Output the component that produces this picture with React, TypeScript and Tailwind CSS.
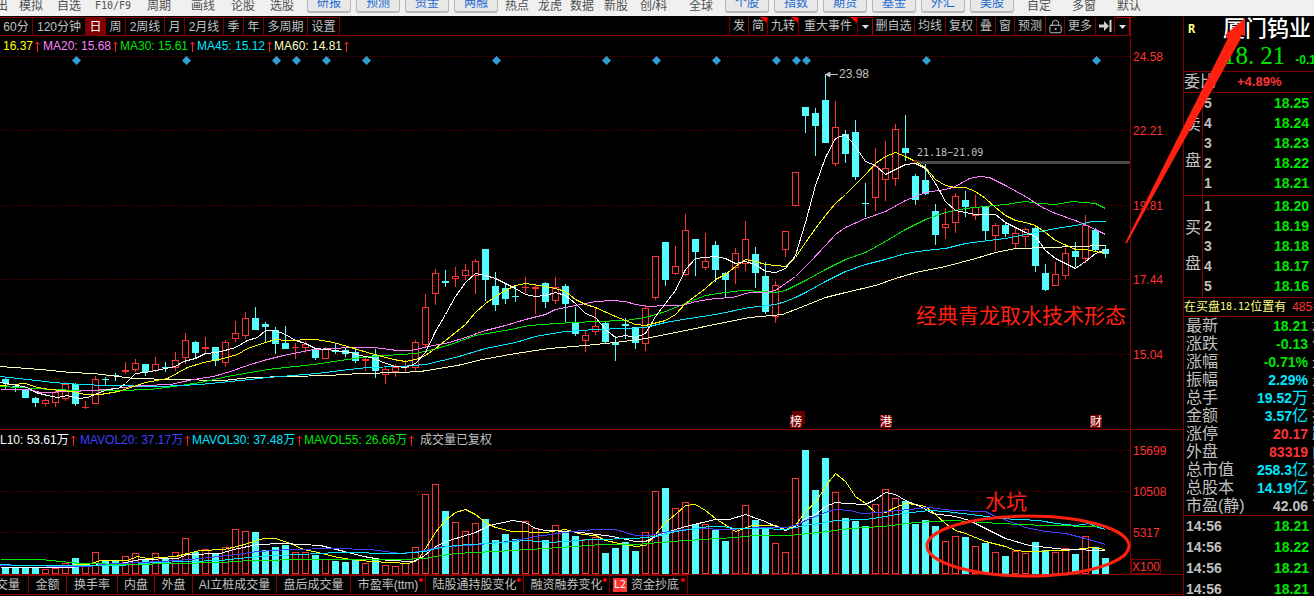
import React from "react";
import { LockKeyhole } from "lucide-react";

/* direction, high, body top, body bottom, low, volume top (chart units, y grows downwards) */
type Bar = ["u" | "d", number, number, number, number, number];

const bars: Bar[] = [
  ["d", 377, 379, 383, 389, 567], ["d", 385, 386, 387, 392, 568], ["d", 389, 390, 398, 398, 568], ["d", 397, 398, 403, 407, 568],
  ["u", 399, 400, 404, 406, 569], ["u", 390, 392, 403, 407, 568], ["u", 382, 384, 399, 401, 563], ["d", 383, 384, 404, 406, 558],
  ["u", 401, 407, 408, 409, 565], ["u", 376, 379, 404, 404, 552], ["d", 377, 379, 380, 386, 560], ["d", 373, 375, 376, 381, 560],
  ["u", 362, 370, 372, 374, 556], ["u", 359, 363, 370, 372, 553], ["d", 364, 364, 372, 376, 559], ["u", 357, 364, 371, 372, 553],
  ["d", 362, 367, 368, 372, 558], ["u", 352, 360, 368, 371, 552], ["u", 333, 340, 358, 364, 538], ["d", 341, 342, 353, 359, 552],
  ["u", 337, 347, 349, 353, 549], ["d", 347, 347, 361, 366, 554], ["u", 340, 342, 363, 367, 547], ["u", 321, 333, 339, 342, 529],
  ["u", 312, 318, 336, 339, 531], ["d", 307, 318, 330, 330, 532], ["d", 322, 324, 327, 342, 550], ["d", 327, 330, 344, 354, 547],
  ["d", 326, 343, 349, 349, 545], ["u", 343, 347, 348, 359, 552], ["u", 341, 344, 348, 353, 552], ["d", 349, 349, 358, 360, 555],
  ["u", 347, 349, 359, 359, 559], ["d", 344, 350, 352, 354, 561], ["d", 348, 350, 354, 357, 562], ["d", 348, 352, 361, 363, 559],
  ["u", 357, 359, 361, 371, 563], ["d", 349, 355, 371, 378, 558], ["u", 367, 369, 375, 384, 565], ["u", 364, 367, 372, 377, 566],
  ["u", 360, 367, 368, 373, 563], ["u", 340, 342, 368, 371, 547], ["u", 294, 307, 345, 348, 494], ["u", 269, 273, 294, 305, 484],
  ["d", 270, 281, 283, 287, 511], ["u", 267, 276, 279, 287, 522], ["u", 264, 270, 276, 280, 531], ["u", 259, 261, 276, 294, 523],
  ["d", 249, 249, 280, 301, 519], ["d", 272, 286, 305, 311, 540], ["d", 283, 288, 299, 304, 534], ["d", 286, 296, 297, 302, 539],
  ["u", 277, 287, 288, 293, 521], ["u", 284, 287, 289, 314, 528], ["d", 282, 283, 302, 308, 540], ["u", 277, 287, 301, 304, 525],
  ["d", 284, 286, 304, 322, 532], ["d", 307, 323, 334, 336, 536], ["u", 331, 335, 341, 352, 539], ["u", 307, 326, 332, 335, 537],
  ["d", 322, 323, 342, 344, 553], ["d", 336, 343, 345, 361, 548], ["d", 318, 324, 326, 339, 542], ["d", 327, 327, 343, 349, 551],
  ["u", 305, 308, 344, 351, 532], ["u", 256, 256, 298, 300, 491], ["d", 242, 242, 280, 286, 488], ["u", 246, 266, 274, 275, 508],
  ["u", 214, 230, 275, 276, 502], ["d", 239, 239, 252, 276, 524], ["u", 233, 261, 268, 270, 524], ["d", 241, 245, 270, 282, 530],
  ["d", 272, 273, 280, 297, 541], ["u", 248, 253, 268, 284, 528], ["u", 221, 239, 264, 271, 505], ["d", 247, 254, 273, 288, 520],
  ["d", 262, 276, 312, 314, 527], ["u", 281, 285, 317, 323, 543], ["u", 231, 231, 250, 257, 552], ["u", 172, 172, 206, 207, 478],
  ["d", 107, 107, 116, 133, 450], ["d", 108, 113, 126, 156, 490], ["d", 74, 100, 143, 143, 458], ["u", 101, 127, 164, 166, 492],
  ["d", 130, 134, 154, 163, 518], ["d", 120, 132, 177, 180, 521], ["d", 183, 203, 204, 217, 526], ["u", 148, 166, 198, 211, 504],
  ["u", 141, 168, 180, 201, 489], ["u", 124, 129, 179, 186, 498], ["d", 115, 148, 153, 161, 501], ["d", 174, 176, 200, 205, 524],
  ["d", 164, 180, 194, 195, 520], ["d", 204, 211, 235, 245, 526], ["u", 208, 224, 228, 239, 541], ["u", 193, 196, 223, 233, 536],
  ["d", 191, 200, 207, 217, 537], ["u", 195, 207, 216, 220, 546], ["d", 207, 207, 231, 240, 543], ["u", 223, 225, 236, 251, 552],
  ["d", 222, 225, 234, 237, 556], ["u", 227, 233, 244, 248, 551], ["u", 228, 229, 237, 247, 553], ["d", 226, 228, 266, 272, 542],
  ["d", 264, 273, 290, 291, 550], ["u", 262, 274, 286, 286, 552], ["u", 248, 253, 276, 279, 548], ["d", 242, 251, 257, 267, 554],
  ["u", 215, 225, 259, 263, 536], ["d", 228, 230, 250, 252, 547], ["d", 245, 249, 254, 258, 558],
];

const UP = "#ff3232";
const DOWN = "#54fcfc";
const RULE = "#800000";

const priceLines = [
  { color: "#ffffc0", points: "0,366 40,369 70,372 93,373 110,375 133,378 173,379 223,380 250,377 290,376 327,375 360,373 400,372 420,371 457,365 482,359 515,353 549,348 585,345 615,342 645,338 685,330 719,323 749,317 782,314 795,309 805,305 825,297 845,292 875,285 895,278 915,272 945,266 975,258 995,252 1015,248 1049,247 1075,246 1105,245" },
  { color: "#00e600", points: "0,386 37,388 50,389 80,390 117,390 150,389 173,386 200,382 227,376 267,369 313,364 347,359 370,356 400,354 415,353 433,349 453,343 475,335 505,330 529,325 555,323 595,321 625,320 645,317 665,311 685,303 705,295 725,292 742,290 762,291 775,292 785,290 795,285 805,280 825,269 845,259 865,252 885,241 905,229 925,219 945,212 965,208 985,206 1005,204 1025,201 1039,203 1055,204 1072,201 1095,203 1105,208" },
  { color: "#00e6ff", points: "0,376 27,379 53,382 80,384 107,385 160,386 200,384 240,380 267,377 293,375 317,373 340,370 367,367 400,366 425,364 455,357 485,348 515,342 535,336 565,331 595,329 625,328 645,327 665,322 689,318 715,314 749,307 775,304 785,301 795,297 805,292 825,281 845,271 865,264 885,259 905,253 925,250 945,248 965,243 1005,238 1035,232 1055,228 1075,225 1092,221 1105,221" },
  { color: "#ff80ff", points: "0,389 28,389 40,392 72,391 90,390 107,389 123,387 143,385 170,384 193,379 213,376 230,371 247,365 263,360 283,355 313,349 350,347 373,347 397,350 410,350 415,349 428,346 449,342 465,337 485,330 505,325 525,319 545,314 555,309 575,305 595,301 612,300 625,301 635,304 649,306 665,305 682,305 695,301 715,298 732,297 749,292 765,292 775,290 785,283 795,276 809,262 825,245 835,234 845,227 865,218 885,211 905,200 925,192 945,189 955,186 969,178 979,176 989,177 1005,185 1025,196 1042,207 1055,213 1075,220 1095,229 1105,234" },
  { color: "#ffff00", points: "0,385 25,383 37,387 50,389 72,391 85,394 100,394 118,391 133,386 145,382 167,378 187,367 203,362 223,358 237,354 247,348 265,342 275,339 285,340 315,339 333,342 347,346 367,352 393,359 405,361 415,359 425,355 435,348 445,340 465,324 475,312 485,303 495,296 505,290 515,285 525,283 545,286 555,288 565,291 575,299 585,304 595,307 615,316 635,324 645,325 665,320 675,314 685,303 705,288 715,279 725,274 735,266 745,259 755,261 765,264 775,265 785,266 795,257 805,242 815,228 825,215 835,203 845,194 855,184 865,174 875,163 885,156 895,152 905,156 915,161 925,167 935,179 945,185 955,187 965,187 975,191 985,198 995,207 1005,215 1015,220 1025,222 1035,225 1045,232 1055,240 1075,249 1085,249 1095,251 1105,253" },
  { color: "#ffffff", points: "0,382 17,385 27,387 35,392 47,395 57,397 67,395 78,398 87,397 97,393 107,389 118,388 125,383 135,373 145,372 155,370 175,366 183,361 195,358 205,353 217,352 235,347 247,340 257,337 265,330 275,330 285,334 295,340 305,343 315,348 335,350 350,352 360,355 370,357 383,362 395,366 405,367 415,363 425,352 435,331 445,314 455,296 465,282 475,273 485,275 495,278 505,283 515,288 525,294 535,296 545,295 555,292 565,295 575,303 585,313 595,317 605,329 615,337 625,335 635,337 645,333 655,316 665,303 675,290 685,269 695,258 705,257 715,256 725,258 735,263 745,261 755,264 765,271 775,272 785,268 795,255 805,222 815,185 825,157 835,138 845,134 855,146 865,161 875,165 885,174 895,169 905,164 915,163 925,168 935,183 945,201 955,210 965,212 975,214 985,214 995,214 1005,222 1015,227 1025,232 1035,236 1045,250 1055,258 1065,263 1075,268 1085,261 1095,253 1105,249" },
];

const volumeLines = [
  { color: "#ffff00", points: "0,567 70,567 74,564 88,564 100,560 127,560 137,556 147,558 175,556 187,553 200,550 223,549 237,546 257,540 263,538 275,538 290,543 303,549 318,552 333,556 350,559 370,561 390,562 408,563 417,560 425,548 435,532 445,520 455,512 465,509 475,514 485,522 495,527 512,531 545,532 565,529 582,534 595,535 605,540 619,543 635,546 645,545 655,534 665,522 675,514 685,505 695,504 705,510 715,518 735,531 752,525 775,525 785,529 795,525 805,511 815,502 825,486 835,473 845,481 855,496 865,503 875,512 885,512 895,507 905,503 915,504 925,506 935,514 945,523 955,530 965,533 985,541 1005,546 1015,550 1025,551 1065,550 1092,547 1105,549" },
  { color: "#ffffff", points: "0,567 70,567 87,565 120,563 140,559 177,558 187,554 220,553 233,549 257,544 283,543 320,545 340,550 363,556 387,560 413,561 423,556 435,546 449,540 475,532 489,525 512,520 525,522 535,528 545,530 569,531 589,533 612,536 635,541 645,541 659,534 685,526 715,519 729,519 745,514 762,520 785,530 795,526 805,518 815,514 825,506 835,502 845,503 865,504 875,499 885,492 895,494 905,500 922,507 932,513 955,516 969,520 985,528 1005,538 1029,545 1065,549 1105,550" },
  { color: "#4040ff", points: "0,565 90,566 100,564 120,563 160,561 190,559 237,554 257,551 290,549 333,548 370,549 400,553 420,551 437,547 445,546 469,545 509,541 535,536 572,531 595,529 615,529 625,532 635,535 649,535 669,531 695,528 729,529 759,527 785,527 795,525 805,520 815,516 825,512 835,509 849,510 862,513 879,512 899,510 929,507 952,510 985,511 995,516 1012,522 1025,527 1045,531 1065,533 1085,538 1105,544" },
  { color: "#00e6ff", points: "0,564 20,565 120,565 155,562 220,560 257,556 300,554 337,552 400,553 425,551 435,548 455,545 502,542 525,540 549,542 592,539 635,538 655,536 675,531 709,526 722,526 735,528 759,528 785,529 805,525 819,523 835,520 865,519 879,517 902,513 929,510 945,511 979,515 999,518 1039,520 1055,523 1075,525 1089,523 1095,526 1105,529" },
  { color: "#00e600", points: "0,559 40,559 80,563 130,564 220,562 250,560 310,559 400,559 425,558 435,556 455,553 495,551 545,548 602,544 635,544 685,540 735,537 755,535 789,535 819,532 849,528 882,526 915,522 952,520 999,523 1045,525 1099,526" },
];

const diamonds = [76, 186, 276, 296, 326, 366, 496, 606, 656, 716, 776, 796, 806, 926, 1096];

const priceTicks: [number, string][] = [[56, "24.58"], [130, "22.21"], [205, "19.81"], [279, "17.44"], [354, "15.04"]];
const volumeTicks: [number, string][] = [[450, "15699"], [491, "10508"], [532, "5317"]];

type MenuItem = { label: string; width: string; raised?: boolean };
const menu: MenuItem[] = [
  { label: "导出", width: "-ml-4 w-[35px]" },
  { label: "模拟", width: "w-[38px]" },
  { label: "自选", width: "w-[38px]" },
  { label: "F10/F9", width: "w-[52px]" },
  { label: "周期", width: "w-11" },
  { label: "画线", width: "w-10" },
  { label: "论股", width: "w-[39px]" },
  { label: "选股", width: "w-[37px]" },
  { label: "研报", width: "", raised: true },
  { label: "预测", width: "", raised: true },
  { label: "资金", width: "", raised: true },
  { label: "两融", width: "", raised: true },
  { label: "热点", width: "ml-0.5 w-[33px]" },
  { label: "龙虎", width: "w-8" },
  { label: "数据", width: "w-[34px]" },
  { label: "新股", width: "w-9" },
  { label: "创/科", width: "w-[49px]" },
  { label: "全球", width: "w-9" },
  { label: "个股", width: "", raised: true },
  { label: "指数", width: "", raised: true },
  { label: "期货", width: "", raised: true },
  { label: "基金", width: "", raised: true },
  { label: "外汇", width: "", raised: true },
  { label: "美股", width: "", raised: true },
  { label: "自定", width: "ml-2 w-[45px]" },
  { label: "多窗", width: "w-[45px]" },
  { label: "默认", width: "w-[45px]" },
];

const periods = [
  { label: "60分", width: "w-[33px]" },
  { label: "120分钟", width: "w-[53px]" },
  { label: "日", width: "w-5", active: true },
  { label: "周", width: "w-5" },
  { label: "2周线", width: "w-[39px]" },
  { label: "月", width: "w-5" },
  { label: "2月线", width: "w-[39px]" },
  { label: "季", width: "w-5" },
  { label: "年", width: "w-5" },
  { label: "多周期", width: "w-11" },
  { label: "设置", width: "w-8" },
];

const tools: { label: string; width: string; flag?: boolean; icon?: "down" | "lock" | "end" }[] = [
  { label: "发", width: "w-5 border-l" },
  { label: "简", width: "w-[19px]", flag: true },
  { label: "九转", width: "w-[31px]", flag: true },
  { label: "重大事件", width: "w-[59px]", flag: true },
  { label: "更多事件", width: "w-[15px] border-[#c00000] border-t", icon: "down" },
  { label: "删自选", width: "w-[42px]" },
  { label: "均线", width: "w-[31px]" },
  { label: "复权", width: "w-[31px]" },
  { label: "叠", width: "w-[19px]" },
  { label: "窗", width: "w-[19px]" },
  { label: "预测", width: "w-[31px]" },
  { label: "锁定", width: "w-[19px]", icon: "lock" },
  { label: "更多", width: "w-[31px]" },
  { label: "移到末端", width: "w-[19px]", icon: "end" },
  { label: "展开", width: "w-[15px] border-[#c00000] border-t", icon: "down" },
];

const indicators: { label: string; width: string; dot?: boolean; badge?: string }[] = [
  { label: "成交量", width: "w-[29px] justify-end pr-2" },
  { label: "金额", width: "w-[38px] justify-center" },
  { label: "换手率", width: "w-[51px] justify-center" },
  { label: "内盘", width: "w-[37px] justify-center" },
  { label: "外盘", width: "w-[38px] justify-center" },
  { label: "AI立桩成交量", width: "w-[84px] justify-center" },
  { label: "盘后成交量", width: "w-[74px] justify-center" },
  { label: "市盈率(ttm)", width: "w-[75px] justify-center", dot: true },
  { label: "陆股通持股变化", width: "w-[98px] justify-center", dot: true },
  { label: "融资融券变化", width: "w-[86px] justify-center", dot: true },
  { label: "资金抄底", width: "w-[78px] gap-1 pl-[3px]", dot: true, badge: "L2" },
];

const asks = [["5", "18.25"], ["4", "18.24"], ["3", "18.23"], ["2", "18.22"], ["1", "18.21"]];
const bids = [["1", "18.20"], ["2", "18.19"], ["3", "18.18"], ["4", "18.17"], ["5", "18.16"]];

const GREEN = "text-[#00e600]";
const CYAN = "text-[#00e6ff]";
const RED = "text-[#ff3232]";
const GRAY = "text-[#c0c0c0]";

const stats = [
  { name: "最新", value: "18.21", tone: GREEN, next: "均价" },
  { name: "涨跌", value: "-0.13", tone: GREEN, next: "今开" },
  { name: "涨幅", value: "-0.71%", tone: GREEN, next: "最高" },
  { name: "振幅", value: "2.29%", tone: CYAN, next: "最低" },
  { name: "总手", value: "19.52", unit: "万", tone: CYAN, next: "量比" },
  { name: "金额", value: "3.57", unit: "亿", tone: CYAN, next: "换手" },
  { name: "涨停", value: "20.17", tone: RED, next: "跌停" },
  { name: "外盘", value: "83319", tone: RED, next: "内盘" },
  { name: "总市值", value: "258.3", unit: "亿", tone: CYAN, next: "流值" },
  { name: "总股本", value: "14.19", unit: "亿", tone: CYAN, next: "流通" },
  { name: "市盈(静)", value: "42.06", tone: GRAY, next: "市盈" },
];

const trades = [["14:56", "18.21"], ["14:56", "18.22"], ["14:56", "18.21"], ["14:56", "18.21"]];

function UpArrow() {
  return (
    <svg className="ml-0.5 shrink-0" width="5" height="11" viewBox="0 0 5 11" aria-hidden="true">
      <path d="M2.5 11V1M0.5 3.5L2.5 1L4.5 3.5" stroke="#ff2020" fill="none" />
    </svg>
  );
}

function Reading({ text, className }: { text: string; className: string }) {
  return (
    <span className={`flex shrink-0 items-center ${className}`}>
      {text}
      <UpArrow />
    </span>
  );
}

function Candle({ bar, x }: { bar: Bar; x: number }) {
  const [dir, high, top, bottom, low] = bar;
  const solid = dir === "d" || bottom - top <= 2;
  const color = dir === "u" ? UP : DOWN;
  return (
    <g>
      {high < top && <path d={`M${x + 3.5} ${high}V${top}`} stroke={color} />}
      {low > bottom && <path d={`M${x + 3.5} ${bottom}V${low}`} stroke={color} />}
      {solid ? (
        <rect x={x} y={top} width="7" height={bottom - top} fill={color} />
      ) : (
        <rect x={x + 0.5} y={top + 0.5} width="6" height={bottom - top - 1} fill="none" stroke={color} />
      )}
    </g>
  );
}

function Volume({ bar, x }: { bar: Bar; x: number }) {
  const top = bar[5];
  return bar[0] === "d" ? (
    <rect x={x} y={top} width="7" height={574 - top} fill={DOWN} />
  ) : (
    <rect x={x + 0.5} y={top + 0.5} width="6" height={573 - top} fill="#000" stroke={UP} />
  );
}

function Grid({ ticks }: { ticks: [number, string][] }) {
  return (
    <g>
      {ticks.map(([y, label]) => (
        <g key={label}>
          <path d={`M1 ${y + 0.5}H1130`} stroke={RULE} strokeDasharray="1 2" shapeRendering="crispEdges" />
          <text x="1133" y={y + 5} fontSize="12" fill={UP}>{label}</text>
        </g>
      ))}
    </g>
  );
}

function Lines({ lines }: { lines: { color: string; points: string }[] }) {
  return (
    <g fill="none" shapeRendering="crispEdges" transform="translate(0.5 0.5)">
      {lines.map((l) => (
        <polyline key={l.color} points={l.points} stroke={l.color} />
      ))}
    </g>
  );
}

function Tag({ x, label }: { x: number; label: string }) {
  return (
    <g>
      <rect x={x} y="415" width="12" height="13" fill={RULE} />
      <text x={x} y="426" fontSize="12" fill="#fff">{label}</text>
    </g>
  );
}

function PriceChart() {
  return (
    <section className="relative">
      <div className="absolute inset-x-0 top-0 flex h-5 items-center text-xs">
        <Reading text="16.37" className="w-[43px] pl-[3px] text-[#ffff00]" />
        <Reading text="MA20: 15.68" className="w-[77px] text-[#ff80ff]" />
        <Reading text="MA30: 15.61" className="w-[77px] text-[#00e600]" />
        <Reading text="MA45: 15.12" className="w-[77px] text-[#00e6ff]" />
        <Reading text="MA60: 14.81" className="w-[77px] text-[#ffffc0]" />
      </div>
      <svg className="block h-auto w-full" viewBox="0 36 1183 394" role="img" aria-label="日K线">
        <Grid ticks={priceTicks} />
        {diamonds.map((x) => (
          <path key={x} d={`M${x + 0.5} 56L${x + 5} 60.5L${x + 0.5} 65L${x - 4} 60.5Z`} fill="#309fd0" />
        ))}
        <rect x="915" y="161" width="215" height="3" fill="#484848" />
        <g shapeRendering="crispEdges">
          {bars.map((b, i) => (
            <Candle key={i} bar={b} x={2 + i * 10} />
          ))}
        </g>
        <Lines lines={priceLines} />
        <rect x="914" y="160" width="3" height="3" fill="#a02020" />
        <path d="M826 74.5H838M830 72V77L826 74.5Z" stroke="#c0c0c0" fill="#c0c0c0" />
        <text x="839" y="78" fontSize="12" fill="#c0c0c0">23.98</text>
        <text x="917" y="156" fontSize="10" fill="#c0c0c0" fontFamily="DejaVu Sans Mono, monospace">21.18−21.09</text>
        <text x="916" y="323" fontSize="21" fill="#ff2010">经典青龙取水技术形态</text>
        <rect x="792" y="411" width="13" height="13" fill="#600000" />
        <Tag x={790} label="榜" />
        <Tag x={880} label="港" />
        <Tag x={1090} label="财" />
        <path d="M1130.5 36V430M0 429.5H1183" stroke={RULE} shapeRendering="crispEdges" />
      </svg>
    </section>
  );
}

function VolumeChart() {
  return (
    <section className="relative">
      <div className="absolute inset-x-0 top-0 flex h-5 items-center text-xs">
        <Reading text="L10: 53.61万" className="w-20 text-white" />
        <Reading text="MAVOL20: 37.17万" className="w-28 text-[#4040ff]" />
        <Reading text="MAVOL30: 37.48万" className="w-28 text-[#00e6ff]" />
        <Reading text="MAVOL55: 26.66万" className="w-[116px] text-[#00e600]" />
        <span className="text-[#c0c0c0]">成交量已复权</span>
      </div>
      <svg className="block h-auto w-full overflow-visible" viewBox="0 430 1183 145" role="img" aria-label="成交量">
        <Grid ticks={volumeTicks} />
        <g shapeRendering="crispEdges">
          {bars.map((b, i) => (
            <Volume key={i} bar={b} x={2 + i * 10} />
          ))}
        </g>
        <Lines lines={volumeLines} />
        <text x="985" y="509" fontSize="21" fill="#ff2010">水坑</text>
        <rect x="1131.5" y="559.5" width="29" height="14" fill="none" stroke={RULE} />
        <text x="1132" y="571" fontSize="12" fill={UP}>X100</text>
        <path d="M1130.5 430V575M0 574.5H1183" stroke={RULE} shapeRendering="crispEdges" />
      </svg>
    </section>
  );
}

function ToolIcon({ icon }: { icon: "down" | "lock" | "end" }) {
  if (icon === "lock") return <LockKeyhole size={15} strokeWidth={1.6} aria-hidden="true" />;
  if (icon === "down")
    return (
      <svg width="7" height="4" viewBox="0 0 7 4" aria-hidden="true">
        <path d="M0 0H7L3.5 4Z" fill="#e0e0e0" />
      </svg>
    );
  return (
    <svg width="13" height="12" viewBox="0 0 13 12" aria-hidden="true">
      <path d="M0 4.5H5V1L10 6L5 11V7.5H0Z" fill="#d0d0d0" />
      <path d="M11.5 0V12" stroke="#d0d0d0" strokeWidth="2" />
    </svg>
  );
}

function PeriodBar() {
  return (
    <nav className="flex h-5 pt-px">
      <div className="flex min-w-0 flex-1 justify-between border-r border-b border-[#800000]">
        <div className="flex">
          {periods.map((p) => (
            <button
              key={p.label}
              type="button"
              className={`flex shrink-0 items-center justify-center border-t border-r border-[#800000] ${p.width} ${p.active ? "bg-[#800000] text-white" : "text-[#c0c0c0]"}`}
            >
              {p.label}
            </button>
          ))}
        </div>
        <div className="flex">
          {tools.map((t) => (
            <button
              key={t.label}
              type="button"
              aria-label={t.label}
              className={`relative flex shrink-0 items-center justify-center border-r border-[#800000] text-[#c0c0c0] ${t.width}`}
            >
              {t.icon ? <ToolIcon icon={t.icon} /> : t.label}
              {t.flag && (
                <svg className="absolute top-0 right-0" width="7" height="6" viewBox="0 0 7 6" aria-hidden="true">
                  <path d="M0 0H7V6Z" fill="#ff0000" />
                </svg>
              )}
            </button>
          ))}
        </div>
      </div>
      <div className="w-[52px]" />
    </nav>
  );
}

function IndicatorBar() {
  return (
    <nav className="flex h-5 border-b border-[#800000]">
      {indicators.map((t) => (
        <button
          key={t.label}
          type="button"
          className={`relative flex shrink-0 items-center border-t border-r border-[#800000] whitespace-nowrap text-[#c0c0c0] ${t.width}`}
        >
          {t.badge && (
            <span className="flex h-3.5 w-3.5 items-center justify-center bg-[#ff3232] font-['DejaVu_Sans_Mono',monospace] text-[10px] text-white">
              {t.badge}
            </span>
          )}
          {t.label}
          {t.dot && <span className="absolute top-0.5 right-0.5 h-1 w-1 rounded-full bg-[#ff0000]" />}
        </button>
      ))}
    </nav>
  );
}

function Book({ side, rows, end }: { side: string; rows: string[][]; end: string }) {
  return (
    <div className="flex border-b border-[#800000]">
      <div className="flex w-[19px] shrink-0 flex-col items-center gap-5 border-r border-[#800000] pt-6 text-base leading-4 text-[#c0c0c0]">
        <span>{side}</span>
        <span>盘</span>
      </div>
      <table className={`flex-1 border-separate border-spacing-0 text-sm font-bold ${end}`} aria-label={`${side}盘`}>
        <tbody>
          {rows.map(([level, price]) => (
            <tr key={level} className="h-5">
              <th scope="row" className="p-0 pl-px text-left leading-5 text-[#c0c0c0]">{level}</th>
              <td className="p-0 pr-[5px] text-right leading-5 text-[#00e600]">{price}</td>
            </tr>
          ))}
        </tbody>
      </table>
    </div>
  );
}

function QuotePanel() {
  return (
    <aside className="mt-px w-[131px] shrink-0 overflow-hidden border-l border-[#800000] whitespace-nowrap">
      <header className="h-[55px] border-b border-[#800000]">
        <div className="flex h-6 items-center">
          <span className="w-[39px] shrink-0 pl-1 font-['DejaVu_Sans_Mono',monospace] text-xs font-bold text-[#ffff80]">R</span>
          <h1 className="text-[22px] leading-6 font-medium text-white">厦门钨业</h1>
        </div>
        <div className="flex h-[30px] items-center pl-[39px] text-[#00e600]">
          <span className="flex shrink-0 gap-1.5 font-['Liberation_Serif',serif] text-[25px] leading-[30px]">
            <span>18.</span>
            <span>21</span>
          </span>
          <span className="pt-2 pl-2.5 text-xs font-bold">-0.13</span>
        </div>
      </header>
      <div className="flex h-[21px] items-center border-b border-[#800000]">
        <span className="w-[53px] text-base leading-5 text-[#c0c0c0]">委比</span>
        <span className="text-[13px] font-bold text-[#ff3232]">+4.89%</span>
      </div>
      <Book side="卖" rows={asks} end="mb-0.5" />
      <Book side="买" rows={bids} end="mb-px" />
      <p className="flex h-[19px] items-center border-b border-[#800000] text-xs text-[#ffff80]">
        在买盘<span className="font-['DejaVu_Sans_Mono',monospace] text-[10px]">18.12</span>位置有
        <span className="pl-1.5 text-[#ff3232]">485手</span>
      </p>
      <table className="w-[157px] table-fixed border-separate border-spacing-0 border-b border-[#800000]" aria-label="行情">
        <tbody>
          {stats.map((s) => (
            <tr key={s.name} className="h-[18px]">
              <th scope="row" className="w-[60px] p-0 pl-0.5 text-left text-base leading-[18px] font-normal text-[#c0c0c0]">{s.name}</th>
              <td className={`w-16 p-0 text-right text-sm leading-[18px] font-bold ${s.tone}`}>
                {s.value}
                {s.unit && <span className="align-bottom text-base leading-[18px] font-normal">{s.unit}</span>}
              </td>
              <td className="w-[33px] p-0 pl-1 text-base leading-[18px] text-[#c0c0c0]">{s.next}</td>
            </tr>
          ))}
        </tbody>
      </table>
      <table className="w-full border-separate border-spacing-0 text-sm font-bold" aria-label="成交明细">
        <tbody>
          {trades.map(([time, price], i) => (
            <tr key={i} className="h-[21px]">
              <td className="p-0 pl-0.5 leading-[21px] text-[#c0c0c0]">{time}</td>
              <td className="p-0 pr-[5px] text-right leading-[21px] text-[#00e600]">{price}</td>
            </tr>
          ))}
        </tbody>
      </table>
    </aside>
  );
}

export default function App() {
  return (
    <div className="relative flex h-screen flex-col overflow-hidden bg-black font-['Liberation_Sans','Noto_Sans_CJK_SC',sans-serif] text-xs">
      <header className="flex h-4 shrink-0 items-end overflow-hidden bg-[#f0f0f0] pb-[3px]">
        {menu.map((m) =>
          m.raised ? (
            <button
              key={m.label}
              type="button"
              className="mr-[5px] h-6 w-11 shrink-0 rounded-[3px] border border-b-2 border-[#b8b8b8] bg-[#e8e8e8] pt-1 text-xs leading-4 text-[#1c6ad0]"
            >
              {m.label}
            </button>
          ) : (
            <button
              key={m.label}
              type="button"
              className={`shrink-0 text-left leading-[14px] whitespace-nowrap text-[#505050] ${m.width} ${m.label === "F10/F9" ? "font-['DejaVu_Sans_Mono',monospace] text-[10px]" : ""}`}
            >
              {m.label}
            </button>
          ),
        )}
      </header>
      <div className="flex min-h-0 flex-1">
        <main className="min-w-0 flex-1 overflow-hidden">
          <PeriodBar />
          <PriceChart />
          <VolumeChart />
          <IndicatorBar />
        </main>
        <QuotePanel />
      </div>
      <svg className="pointer-events-none absolute top-0 left-0 h-auto w-full" viewBox="0 0 1314 596" aria-hidden="true">
        <ellipse cx="1028" cy="546" rx="101" ry="30" fill="none" stroke="#ff2010" strokeWidth="3" />
        <path d="M1125 243L1228 38L1225 35L1245 18V36L1241 35L1240 40L1127 243Z" fill="#ff2010" />
      </svg>
    </div>
  );
}
